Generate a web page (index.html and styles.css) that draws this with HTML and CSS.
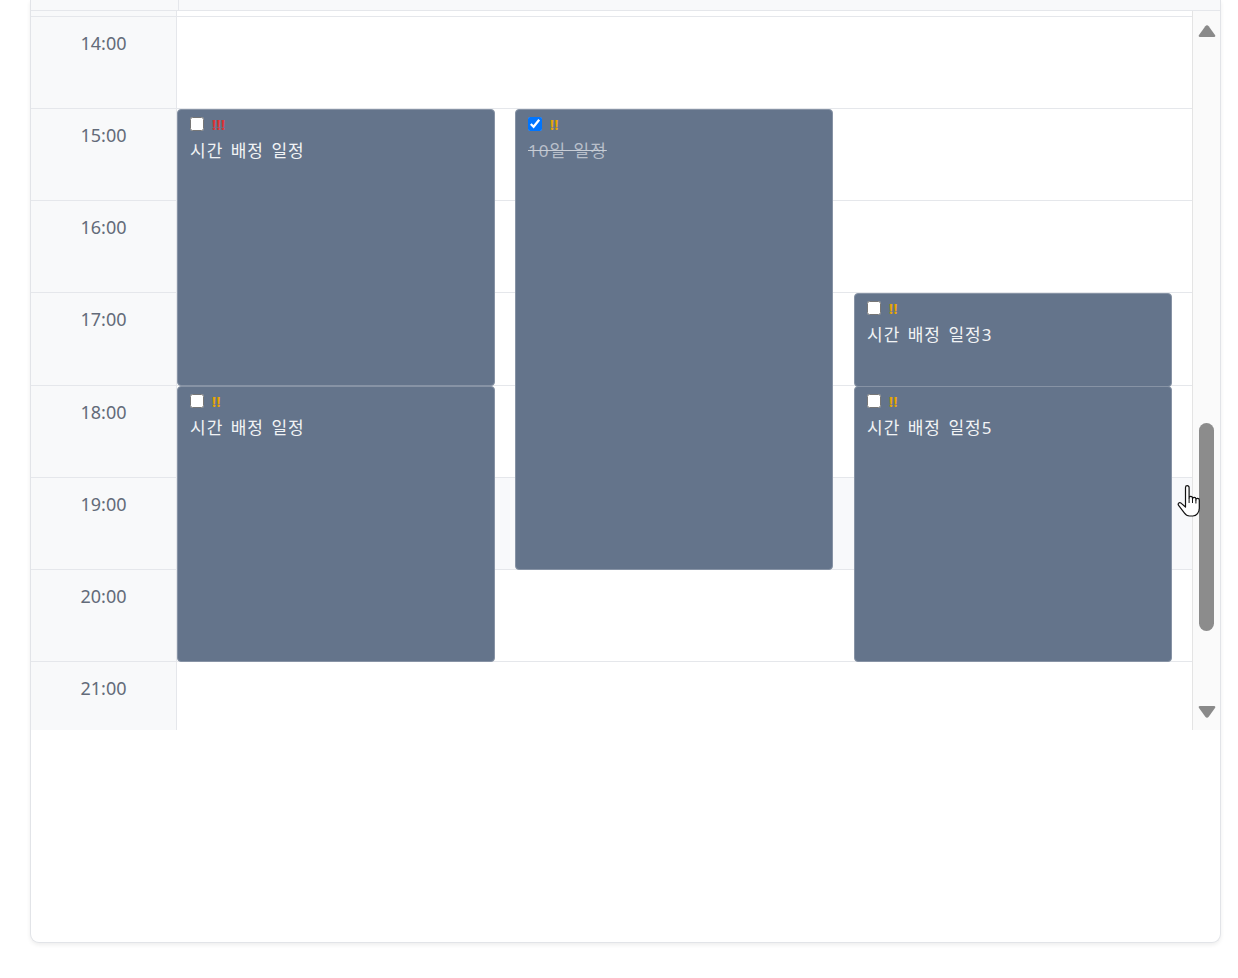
FILE: index.html
```html
<!DOCTYPE html>
<html lang="ko">
<head>
<meta charset="utf-8">
<title>일정</title>
<link rel="stylesheet" href="styles.css">
</head>
<body>
<div class="page">
  <div class="card">
    <div class="head">
      <div class="head-time"></div>
      <div class="head-days"></div>
    </div>
    <div class="body">
      <div class="grid">
        <div class="row partial"><div class="time"></div><div class="slot"></div></div>
        <div class="rows">
          <div class="row"><div class="time">14:00</div><div class="slot"></div></div>
          <div class="row"><div class="time">15:00</div><div class="slot"></div></div>
          <div class="row"><div class="time">16:00</div><div class="slot"></div></div>
          <div class="row"><div class="time">17:00</div><div class="slot"></div></div>
          <div class="row"><div class="time">18:00</div><div class="slot"></div></div>
          <div class="row hover"><div class="time">19:00</div><div class="slot"></div></div>
          <div class="row"><div class="time">20:00</div><div class="slot"></div></div>
          <div class="row"><div class="time">21:00</div><div class="slot"></div></div>
          <div class="events">
            <div class="ev" style="left:0;top:93px;height:277px">
              <div class="ev-head"><input type="checkbox"><span class="prio high">!!!</span></div>
              <div class="ev-title">시간 배정 일정</div>
            </div>
            <div class="ev" style="left:0;top:370px;height:276px">
              <div class="ev-head"><input type="checkbox"><span class="prio mid">!!</span></div>
              <div class="ev-title">시간 배정 일정</div>
            </div>
            <div class="ev done" style="left:338px;top:93px;height:461px">
              <div class="ev-head"><input type="checkbox" checked><span class="prio mid">!!</span></div>
              <div class="ev-title">10일 일정</div>
            </div>
            <div class="ev" style="left:677px;top:277px;height:94px">
              <div class="ev-head"><input type="checkbox"><span class="prio mid">!!</span></div>
              <div class="ev-title">시간 배정 일정3</div>
            </div>
            <div class="ev" style="left:677px;top:370px;height:276px">
              <div class="ev-head"><input type="checkbox"><span class="prio mid">!!</span></div>
              <div class="ev-title">시간 배정 일정5</div>
            </div>
          </div>
        </div>
      </div>
      <div class="sb">
        <svg class="arrow up" width="18" height="13" viewBox="0 0 18 13"><path d="M7.3 1.2 Q9 -0.6 10.7 1.2 L17 10 Q18 12 16 12 H2 Q0 12 1 10 Z" fill="#8a8a8a"/></svg>
        <div class="thumb"></div>
        <svg class="arrow down" width="18" height="13" viewBox="0 0 18 13"><path d="M7.3 11.8 Q9 13.6 10.7 11.8 L17 3 Q18 1 16 1 H2 Q0 1 1 3 Z" fill="#8a8a8a"/></svg>
      </div>
      <svg class="cursor" width="28" height="36" viewBox="0 0 28 36"><path d="M9.5 3.5 a1.8 1.8 0 0 1 3.6 0 V14 a1.7 1.7 0 0 1 3.4 0 V15 a1.7 1.7 0 0 1 3.4 0 V16 a1.7 1.7 0 0 1 3.4 0 V24 c0 4.5-2.6 8-6.5 8 H13.5 c-2.2 0-3.8-1-5-2.8 L2.6 21.4 c-1.2-1.6 0.6-3.6 2.4-2.3 L9.5 23 Z" fill="#fff" stroke="#111" stroke-width="1.2" stroke-linejoin="round"/><path d="M13.1 14 V19 M16.5 15 V19 M19.9 16 V19.5" stroke="#111" stroke-width="1" fill="none"/></svg>
    </div>
    <div class="rest"></div>
  </div>
</div>
</body>
</html>
```

FILE: styles.css
```css
* { box-sizing: border-box; }
html, body { margin: 0; padding: 0; background: #fff; }
body {
  font-family: "Noto Sans", "Noto Sans CJK KR", sans-serif;
  color: #1f2937;
}
.page {
  padding: 0 17px 35px 30px;
}
.card {
  border: 1px solid #e2e4e8;
  border-top: none;
  border-radius: 0 0 9px 9px;
  box-shadow: 0 2px 4px rgba(0,0,0,0.07);
  background: #fff;
  display: flex;
  flex-direction: column;
}
.head {
  height: 11px;
  display: flex;
  background: #f8f9fa;
  border-bottom: 1px solid #e5e7eb;
}
.head-time {
  width: 148px;
  border-right: 1px solid #e5e7eb;
}
.head-days { flex: 1; }

.body {
  display: flex;
  height: 719px;
  position: relative;
}
.grid {
  flex: 1;
  overflow: hidden;
}
.rows { position: relative; }
.row {
  display: flex;
  height: 92.14px;
  border-top: 1px solid #e5e7eb;
}
.row.partial {
  height: 5px;
  border-top: none;
}
.time {
  width: 146px;
  flex: none;
  background: #f8f9fa;
  border-right: 1px solid #e5e7eb;
  text-align: center;
  font-size: 18px;
  line-height: 26px;
  padding-top: 13px;
  color: #636b79;
}
.slot { flex: 1; }
.row.hover .slot { background: #f8f9fb; }

.events {
  position: absolute;
  left: 146px;
  right: 0;
  top: 0;
  bottom: 0;
}
.ev {
  position: absolute;
  width: 318px;
  background: #64748b;
  border: 1px solid #8793a5;
  border-radius: 4px;
  padding: 6px 12px;
  color: #f3f4f6;
}
.ev-head {
  display: flex;
  align-items: center;
  gap: 8px;
  height: 16px;
}
.ev-head input {
  margin: 0;
  width: 14px;
  height: 14px;
}
.prio {
  font-size: 14px;
  font-weight: 700;
  line-height: 14px;
  letter-spacing: 0.6px;
  padding-top: 2px;
}
.prio.high { color: #e03131; }
.prio.mid { color: #e8a600; }
.ev-title {
  margin-top: 7px;
  font-size: 17px;
  line-height: 24px;
  letter-spacing: 1px;
  word-spacing: 2px;
  color: #f1f3f5;
}
.ev.done .ev-title {
  color: #b8bfca;
  text-decoration: line-through;
  text-decoration-color: #c9ced6;
}

.sb {
  width: 28px;
  flex: none;
  border-left: 1px solid #e4e4e4;
  background: #fafafa;
  display: flex;
  flex-direction: column;
  align-items: center;
}
.arrow { display: block; flex: none; }
.arrow.up { margin-top: 14px; }
.thumb {
  width: 15px;
  height: 208px;
  margin-top: 385px;
  border-radius: 8px;
  background: #8c8c8c;
}
.arrow.down { margin-top: 74px; }
.cursor {
  position: absolute;
  left: 1145px;
  top: 473px;
}
.rest { height: 212px; }
```
